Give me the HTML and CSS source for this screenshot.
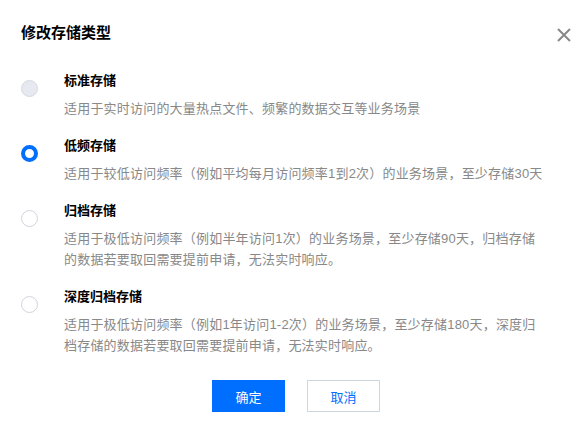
FILE: index.html
```html
<!DOCTYPE html>
<html lang="zh-CN">
<head>
<meta charset="utf-8">
<link rel="stylesheet" href="styles.css">
</head>
<body>
<div class="dialog">
  <div class="header">
    <div class="title">修改存储类型</div>
    <button class="close" aria-label="关闭">
      <svg width="14" height="14" viewBox="0 0 14 14"><path d="M1 1 L13 13 M13 1 L1 13" stroke="#888" stroke-width="2" fill="none"/></svg>
    </button>
  </div>
  <div class="options">
    <div class="option">
      <span class="radio disabled"></span>
      <div class="text">
        <div class="label">标准存储</div>
        <div class="desc">适用于实时访问的大量热点文件、频繁的数据交互等业务场景</div>
      </div>
    </div>
    <div class="option">
      <span class="radio checked"></span>
      <div class="text">
        <div class="label">低频存储</div>
        <div class="desc">适用于较低访问频率（例如平均每月访问频率1到2次）的业务场景，至少存储30天</div>
      </div>
    </div>
    <div class="option">
      <span class="radio"></span>
      <div class="text">
        <div class="label">归档存储</div>
        <div class="desc">适用于极低访问频率（例如半年访问1次）的业务场景，至少存储90天，归档存储的数据若要取回需要提前申请，无法实时响应。</div>
      </div>
    </div>
    <div class="option">
      <span class="radio"></span>
      <div class="text">
        <div class="label">深度归档存储</div>
        <div class="desc">适用于极低访问频率（例如1年访问1-2次）的业务场景，至少存储180天，深度归档存储的数据若要取回需要提前申请，无法实时响应。</div>
      </div>
    </div>
  </div>
  <div class="footer">
    <button class="btn primary">确定</button>
    <button class="btn">取消</button>
  </div>
</div>
</body>
</html>
```

FILE: styles.css
```css
* { box-sizing: border-box; }
html, body {
  margin: 0;
  background: #fff;
}
body {
  font-family: "Liberation Sans", "Noto Sans CJK SC", sans-serif;
  color: #000;
}
.dialog {
  width: 584px;
  padding: 24px 13px 0 21px;
}
.header {
  display: flex;
  justify-content: space-between;
  align-items: center;
  height: 18px;
}
.title {
  font-size: 15px;
  font-weight: bold;
  line-height: 18px;
}
.close {
  border: 0;
  background: none;
  padding: 0;
  width: 14px;
  height: 14px;
  margin-top: 4px;
  display: flex;
}
.options {
  display: flex;
  flex-direction: column;
  gap: 17px;
  margin-top: 29px;
}
.option {
  display: flex;
  align-items: flex-start;
}
.radio {
  flex: none;
  width: 17px;
  height: 17px;
  border-radius: 50%;
  border: 1px solid #cfd5de;
  background: #fff;
  margin-top: 9px;
  margin-right: 26px;
}
.radio.disabled {
  background: #e6e9ef;
  border-color: #d5dae2;
}
.radio.checked {
  border: 4px solid #006eff;
}
.text {
  flex: none;
  width: 479px;
}
.label {
  font-size: 13px;
  font-weight: bold;
  line-height: 20px;
}
.desc {
  margin-top: 7px;
  font-size: 13px;
  line-height: 21px;
  letter-spacing: 0.2px;
  color: #888;
}
.footer {
  display: flex;
  justify-content: center;
  gap: 22px;
  margin-top: 24px;
}
.btn {
  width: 73px;
  height: 32px;
  border: 1px solid #cfd5de;
  background: #fff;
  color: #006eff;
  font-family: inherit;
  font-size: 13px;
  padding: 0;
}
.btn.primary {
  background: #006eff;
  border-color: #006eff;
  color: #fff;
}
```
